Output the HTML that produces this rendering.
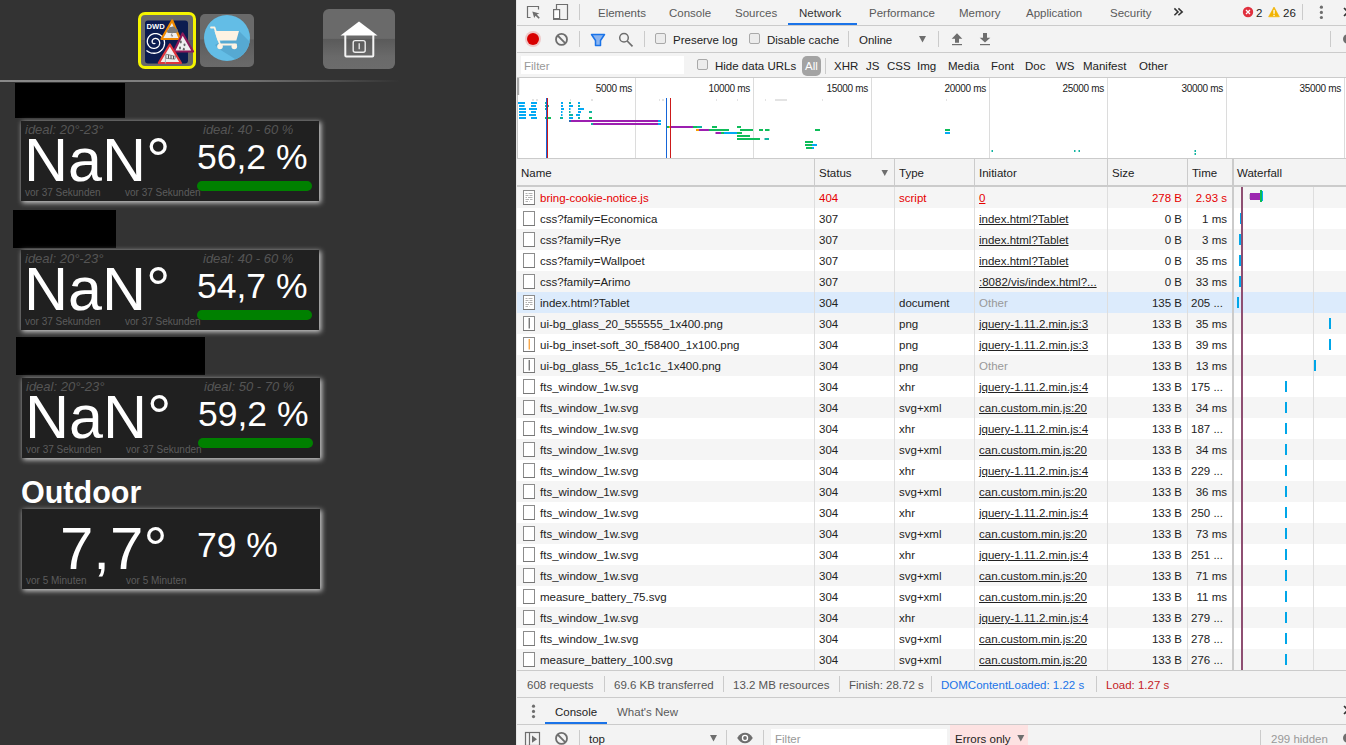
<!DOCTYPE html><html><head><meta charset="utf-8"><style>
*{margin:0;padding:0;box-sizing:border-box}
html,body{width:1346px;height:745px;overflow:hidden;background:#333;font-family:"Liberation Sans",sans-serif}
.ab{position:absolute}
.t{position:absolute;white-space:nowrap;font-size:11.5px;line-height:14px;color:#222}
#dt{position:absolute;left:516px;top:0;width:830px;height:745px;background:#f3f3f3;overflow:hidden}
.hl{position:absolute;height:1px;background:#cbcbcb}
.vl{position:absolute;width:1px;background:#cbcbcb}
.w{position:absolute;background:#202020;box-shadow:1.5px 1.5px 5px 0.5px rgba(255,255,255,.75)}
.big{position:absolute;color:#fff;white-space:nowrap}
.ideal{position:absolute;font-style:italic;font-size:13px;color:#555;white-space:nowrap;line-height:15px}
.vor{position:absolute;font-size:10px;color:#5c5c5c;white-space:nowrap;line-height:12px}
</style></head><body>
<div class="ab" style="left:0;top:80px;width:400px;height:2px;background:linear-gradient(90deg,#8a8a8a 0%,#777 60%,rgba(120,120,120,0) 100%)"></div>
<div class="ab" style="left:138px;top:12px;width:58px;height:57px;border:3px solid #f5f500;border-radius:7px;background:linear-gradient(180deg,#6a6a6a 0%,#6a6a6a 48%,#5c5c5c 50%,#666 80%,#6a6a6a 100%)"></div>
<div class="ab" style="left:200px;top:14px;width:54px;height:53px;border-radius:5px;background:linear-gradient(180deg,#6a6a6a 0%,#6a6a6a 47%,#5c5c5c 49%,#666 80%,#6a6a6a 100%)"></div>
<div class="ab" style="left:323px;top:9px;width:72px;height:60px;border-radius:6px;background:linear-gradient(180deg,#6a6a6a 0%,#6a6a6a 49%,#5a5a5a 50%,#6a6a6a 80%,#6c6c6c 100%)"></div>
<svg class="ab" style="left:0;top:0" width="516" height="80" viewBox="0 0 516 80"><rect x="145" y="20.5" width="43" height="43" rx="3" fill="#0c1c50"/><text x="146.5" y="28.8" font-family="Liberation Sans" font-weight="bold" font-size="7.6" fill="#fff">DWD</text><path d="M155.13 42.79 L155.11 42.89 L155.08 42.98 L155.04 43.08 L154.98 43.17 L154.90 43.26 L154.82 43.34 L154.72 43.41 L154.61 43.48 L154.49 43.53 L154.36 43.57 L154.21 43.60 L154.07 43.62 L153.91 43.62 L153.75 43.60 L153.59 43.56 L153.43 43.51 L153.27 43.44 L153.11 43.35 L152.96 43.24 L152.81 43.12 L152.68 42.97 L152.55 42.81 L152.44 42.63 L152.34 42.44 L152.26 42.24 L152.20 42.02 L152.16 41.79 L152.14 41.55 L152.14 41.31 L152.16 41.06 L152.21 40.81 L152.29 40.56 L152.39 40.31 L152.51 40.07 L152.66 39.84 L152.84 39.61 L153.03 39.40 L153.25 39.21 L153.50 39.03 L153.76 38.87 L154.04 38.73 L154.34 38.62 L154.65 38.53 L154.98 38.48 L155.31 38.45 L155.66 38.45 L156.00 38.48 L156.35 38.55 L156.69 38.65 L157.04 38.78 L157.37 38.94 L157.69 39.14 L158.00 39.37 L158.29 39.63 L158.56 39.91 L158.80 40.23 L159.02 40.57 L159.21 40.94 L159.37 41.32 L159.50 41.73 L159.59 42.15 L159.65 42.58 L159.66 43.02 L159.64 43.47 L159.57 43.92 L159.47 44.36 L159.32 44.80 L159.13 45.24 L158.90 45.65 L158.63 46.05 L158.32 46.43 L157.98 46.79 L157.60 47.12 L157.19 47.41 L156.75 47.68 L156.28 47.90 L155.79 48.08 L155.28 48.22 L154.75 48.32 L154.21 48.37 L153.67 48.37 L153.12 48.32 L152.56 48.22 L152.02 48.08 L151.48 47.88 L150.96 47.63 L150.46 47.34 L149.98 47.00 L149.52 46.61 L149.10 46.18 L148.72 45.71 L148.37 45.21 L148.07 44.67 L147.82 44.10 L147.61 43.50 L147.45 42.88 L147.35 42.25 L147.31 41.60 L147.32 40.95 L147.39 40.29 L147.52 39.64 L147.71 39.00 L147.96 38.36 L148.26 37.75 L148.62 37.16 L149.04 36.61 L149.50 36.08 L150.02 35.59 L150.58 35.15 L151.18 34.76 L151.82 34.42 L152.49 34.13 L153.19 33.90 L153.92 33.73 L154.66 33.63 L155.41 33.59 L156.17 33.62 L156.93 33.71 L157.69 33.87 L158.43 34.11 L159.16 34.40 L159.86 34.77 L160.53 35.19 L161.17 35.68 L161.77 36.22 L162.32 36.82 L162.82 37.48 L163.26 38.17 L163.64 38.91 L163.96 39.69 L164.21 40.49 L164.39 41.32 L164.50 42.17 L164.53 43.03 L164.49 43.90 L164.37 44.76 L164.17 45.62 L163.90 46.46 L163.55 47.28 L163.13 48.08 L162.64 48.83 L162.08 49.55 L161.45 50.22 L160.77 50.83 L160.02 51.39 L159.23 51.88 L158.39 52.30 L157.51 52.65 L156.60 52.92 L155.67 53.12 L154.71 53.23 L153.74 53.25 L152.77 53.19 L151.80 53.05 L150.84 52.82 L149.90 52.50 L148.99 52.10 L148.10 51.62 L147.26 51.07 L146.47 50.43" fill="none" stroke="#fff" stroke-width="1.3"/><path d="M172.2 20.5L180 39H161.5Z" fill="#eee" stroke="#f08a00" stroke-width="2.2" stroke-linejoin="round"/><path d="M168.3 33a1.8 1.8 0 0 1 0.2-3.5a2.4 2.4 0 0 1 2.6-2.4a2.6 2.6 0 0 1 4.3 1.4a2 2 0 0 1 0.4 4.5Z" fill="#7a7a7a"/><path d="M172 33.3l-1 2h1.6l-0.7 1.8" fill="none" stroke="#7a7a7a" stroke-width="0.8"/><path d="M182.6 33.5L193 51.5H173.8Z" fill="#eee" stroke="#8c1858" stroke-width="2.2" stroke-linejoin="round"/><ellipse cx="180.8" cy="42" rx="1" ry="1.4" fill="#666"/><ellipse cx="184.5" cy="44.8" rx="1" ry="1.4" fill="#666"/><ellipse cx="180" cy="48" rx="1" ry="1.4" fill="#666"/><ellipse cx="183.8" cy="49.2" rx="1" ry="1.4" fill="#666"/><path d="M169.8 44.5L181 63H158.8Z" fill="#eee" stroke="#e0343a" stroke-width="2.2" stroke-linejoin="round"/><path d="M165.4 63.5V54.5" stroke="#aaa" stroke-width="0.9"/><path d="M166 54.2L175.5 56.3L174.8 59.2L166 58.3Z" fill="#eee" stroke="#666" stroke-width="0.7"/><path d="M168.5 54.8V58.6M171 55.4V58.9M173.5 55.9V59" stroke="#555" stroke-width="1.1"/><defs><clipPath id="cc"><circle cx="227" cy="38" r="23"/></clipPath></defs><circle cx="227" cy="38" r="23" fill="#63bde6"/><path d="M239 31L262 54L240 62L219 49L215 45Z" fill="#56a9d2" clip-path="url(#cc)"/><path d="M211 27.5H214.5L220 44.5H236" fill="none" stroke="#fdf3e3" stroke-width="1.8" stroke-linecap="round" stroke-linejoin="round"/><path d="M214.5 31H239L236.3 40.5H217.5Z" fill="#fdf3e3"/><circle cx="220" cy="46.5" r="2.8" fill="#fdf3e3"/><circle cx="234.3" cy="46.5" r="2.8" fill="#fdf3e3"/><path d="M359 21.5L377.5 35.5H340.5Z" fill="#fff"/><path d="M345.3 35V55.5a1 1 0 0 0 1 1H372.3a1 1 0 0 0 1-1V35" fill="none" stroke="#f4f4f4" stroke-width="2"/><rect x="353.2" y="40.6" width="12" height="11.6" rx="2" fill="none" stroke="#eee" stroke-width="1.4"/><path d="M359.2 43.3V49.3" stroke="#eee" stroke-width="1.3"/></svg>
<div class="ab" style="left:15px;top:83px;width:110px;height:35px;background:#000"></div>
<div class="ab" style="left:13px;top:210px;width:103px;height:38px;background:#000"></div>
<div class="ab" style="left:16px;top:337px;width:189px;height:38px;background:#000"></div>
<div class="w" style="left:21px;top:121px;width:298px;height:80px"></div>
<div class="ideal" style="left:25px;top:122px">ideal: 20°-23°</div>
<div class="ideal" style="left:203px;top:122px">ideal: 40 - 60 %</div>
<div class="big" style="left:24px;top:130px;font-size:61px;line-height:60px">NaN°</div>
<div class="big" style="left:197px;top:139px;font-size:35.5px;line-height:36px">56,2 %</div>
<div class="vor" style="left:25px;top:187px">vor 37 Sekunden</div>
<div class="vor" style="left:125px;top:187px">vor 37 Sekunden</div>
<div class="ab" style="left:197px;top:181px;width:115px;height:10px;border-radius:5px;background:#008000"></div>
<div class="w" style="left:21px;top:250px;width:298px;height:80px"></div>
<div class="ideal" style="left:25px;top:251px">ideal: 20°-23°</div>
<div class="ideal" style="left:203px;top:251px">ideal: 40 - 60 %</div>
<div class="big" style="left:24px;top:259px;font-size:61px;line-height:60px">NaN°</div>
<div class="big" style="left:197px;top:268px;font-size:35.5px;line-height:36px">54,7 %</div>
<div class="vor" style="left:25px;top:316px">vor 37 Sekunden</div>
<div class="vor" style="left:125px;top:316px">vor 37 Sekunden</div>
<div class="ab" style="left:197px;top:310px;width:115px;height:10px;border-radius:5px;background:#008000"></div>
<div class="w" style="left:22px;top:378px;width:298px;height:80px"></div>
<div class="ideal" style="left:26px;top:379px">ideal: 20°-23°</div>
<div class="ideal" style="left:204px;top:379px">ideal: 50 - 70 %</div>
<div class="big" style="left:25px;top:387px;font-size:61px;line-height:60px">NaN°</div>
<div class="big" style="left:198px;top:396px;font-size:35.5px;line-height:36px">59,2 %</div>
<div class="vor" style="left:26px;top:444px">vor 37 Sekunden</div>
<div class="vor" style="left:126px;top:444px">vor 37 Sekunden</div>
<div class="ab" style="left:198px;top:438px;width:115px;height:10px;border-radius:5px;background:#008000"></div>
<div class="big" style="left:21px;top:475px;font-size:30.5px;line-height:34px;font-weight:bold">Outdoor</div>
<div class="w" style="left:22px;top:509px;width:298px;height:80px"></div>
<div class="big" style="left:60px;top:519px;font-size:60px;line-height:60px">7,7°</div>
<div class="big" style="left:197px;top:527px;font-size:35.5px;line-height:36px">79 %</div>
<div class="vor" style="left:26px;top:575px">vor 5 Minuten</div>
<div class="vor" style="left:126px;top:575px">vor 5 Minuten</div>
<div id="dt">
<div class="ab" style="left:0;top:0;width:1px;height:745px;background:#e6e6e6"></div>
<div class="hl" style="left:1px;top:25px;width:830px"></div>
<div class="hl" style="left:1px;top:52px;width:830px"></div>
<div class="hl" style="left:1px;top:77px;width:830px"></div>
<div class="t" style="left:82px;top:6px;color:#5a5a5a">Elements</div>
<div class="t" style="left:153px;top:6px;color:#5a5a5a">Console</div>
<div class="t" style="left:219px;top:6px;color:#5a5a5a">Sources</div>
<div class="t" style="left:283px;top:6px;color:#333">Network</div>
<div class="t" style="left:353px;top:6px;color:#5a5a5a">Performance</div>
<div class="t" style="left:443px;top:6px;color:#5a5a5a">Memory</div>
<div class="t" style="left:510px;top:6px;color:#5a5a5a">Application</div>
<div class="t" style="left:594px;top:6px;color:#5a5a5a">Security</div>
<div class="ab" style="left:272px;top:23px;width:69px;height:2px;background:#1a73e8"></div>
<div class="vl" style="left:63px;top:4px;height:16px"></div>
<div class="vl" style="left:786px;top:4px;height:16px"></div>
<div class="t" style="left:740px;top:6px;">2</div>
<div class="t" style="left:767px;top:6px;">26</div>
<div class="t" style="left:157px;top:33px;">Preserve log</div>
<div class="t" style="left:251px;top:33px;">Disable cache</div>
<div class="t" style="left:343px;top:33px;">Online</div>
<div class="vl" style="left:63px;top:31px;height:16px"></div>
<div class="vl" style="left:128px;top:31px;height:16px"></div>
<div class="vl" style="left:332px;top:31px;height:16px"></div>
<div class="vl" style="left:422px;top:31px;height:16px"></div>
<div class="vl" style="left:814px;top:31px;height:16px"></div>
<div class="ab" style="left:139px;top:33px;width:11px;height:11px;border:1px solid #a9a9a9;border-radius:2px;background:#ececec"></div>
<div class="ab" style="left:233px;top:33px;width:11px;height:11px;border:1px solid #a9a9a9;border-radius:2px;background:#ececec"></div>
<div class="ab" style="left:5px;top:56px;width:163px;height:18px;background:#fff"></div>
<div class="t" style="left:8px;top:59px;color:#999">Filter</div>
<div class="ab" style="left:181px;top:59px;width:11px;height:11px;border:1px solid #a9a9a9;border-radius:2px;background:#ececec"></div>
<div class="t" style="left:199px;top:59px;">Hide data URLs</div>
<div class="ab" style="left:286px;top:56px;width:19px;height:20px;border-radius:5px;background:#a3a3a3"></div>
<div class="t" style="left:289px;top:59px;color:#fff">All</div>
<div class="vl" style="left:309px;top:58px;height:16px"></div>
<div class="t" style="left:318px;top:59px;">XHR</div>
<div class="t" style="left:350px;top:59px;">JS</div>
<div class="t" style="left:371px;top:59px;">CSS</div>
<div class="t" style="left:401px;top:59px;">Img</div>
<div class="t" style="left:432px;top:59px;">Media</div>
<div class="t" style="left:475px;top:59px;">Font</div>
<div class="t" style="left:509px;top:59px;">Doc</div>
<div class="t" style="left:540px;top:59px;">WS</div>
<div class="t" style="left:567px;top:59px;">Manifest</div>
<div class="t" style="left:623px;top:59px;">Other</div>
<div class="ab" style="left:1px;top:78px;width:830px;height:80px;background:#fff"></div>
<div class="hl" style="left:1px;top:158px;width:830px"></div>
<div class="ab" style="left:119px;top:78px;width:1px;height:80px;background:#dcdcdc"></div>
<div class="t" style="left:39px;top:82px;width:77px;text-align:right;font-size:10px;letter-spacing:-0.3px">5000 ms</div>
<div class="ab" style="left:237px;top:78px;width:1px;height:80px;background:#dcdcdc"></div>
<div class="t" style="left:157px;top:82px;width:77px;text-align:right;font-size:10px;letter-spacing:-0.3px">10000 ms</div>
<div class="ab" style="left:355px;top:78px;width:1px;height:80px;background:#dcdcdc"></div>
<div class="t" style="left:275px;top:82px;width:77px;text-align:right;font-size:10px;letter-spacing:-0.3px">15000 ms</div>
<div class="ab" style="left:473px;top:78px;width:1px;height:80px;background:#dcdcdc"></div>
<div class="t" style="left:393px;top:82px;width:77px;text-align:right;font-size:10px;letter-spacing:-0.3px">20000 ms</div>
<div class="ab" style="left:591px;top:78px;width:1px;height:80px;background:#dcdcdc"></div>
<div class="t" style="left:511px;top:82px;width:77px;text-align:right;font-size:10px;letter-spacing:-0.3px">25000 ms</div>
<div class="ab" style="left:710px;top:78px;width:1px;height:80px;background:#dcdcdc"></div>
<div class="t" style="left:630px;top:82px;width:77px;text-align:right;font-size:10px;letter-spacing:-0.3px">30000 ms</div>
<div class="ab" style="left:828px;top:78px;width:1px;height:80px;background:#dcdcdc"></div>
<div class="t" style="left:748px;top:82px;width:77px;text-align:right;font-size:10px;letter-spacing:-0.3px">35000 ms</div>
<div class="hl" style="left:1px;top:185px;width:830px;height:2px"></div>
<div class="t" style="left:5px;top:166px;">Name</div>
<div class="t" style="left:303px;top:166px;">Status</div>
<div class="t" style="left:383px;top:166px;">Type</div>
<div class="t" style="left:463px;top:166px;">Initiator</div>
<div class="t" style="left:596px;top:166px;">Size</div>
<div class="t" style="left:676px;top:166px;">Time</div>
<div class="t" style="left:721px;top:166px;">Waterfall</div>
<div class="ab" style="left:1px;top:187px;width:830px;height:21px;background:#f5f5f5"></div>
<div class="ab" style="left:1px;top:208px;width:830px;height:21px;background:#fff"></div>
<div class="ab" style="left:1px;top:229px;width:830px;height:21px;background:#f5f5f5"></div>
<div class="ab" style="left:1px;top:250px;width:830px;height:21px;background:#fff"></div>
<div class="ab" style="left:1px;top:271px;width:830px;height:21px;background:#f5f5f5"></div>
<div class="ab" style="left:1px;top:292px;width:830px;height:21px;background:#dcebfc"></div>
<div class="ab" style="left:1px;top:313px;width:830px;height:21px;background:#f5f5f5"></div>
<div class="ab" style="left:1px;top:334px;width:830px;height:21px;background:#fff"></div>
<div class="ab" style="left:1px;top:355px;width:830px;height:21px;background:#f5f5f5"></div>
<div class="ab" style="left:1px;top:376px;width:830px;height:21px;background:#fff"></div>
<div class="ab" style="left:1px;top:397px;width:830px;height:21px;background:#f5f5f5"></div>
<div class="ab" style="left:1px;top:418px;width:830px;height:21px;background:#fff"></div>
<div class="ab" style="left:1px;top:439px;width:830px;height:21px;background:#f5f5f5"></div>
<div class="ab" style="left:1px;top:460px;width:830px;height:21px;background:#fff"></div>
<div class="ab" style="left:1px;top:481px;width:830px;height:21px;background:#f5f5f5"></div>
<div class="ab" style="left:1px;top:502px;width:830px;height:21px;background:#fff"></div>
<div class="ab" style="left:1px;top:523px;width:830px;height:21px;background:#f5f5f5"></div>
<div class="ab" style="left:1px;top:544px;width:830px;height:21px;background:#fff"></div>
<div class="ab" style="left:1px;top:565px;width:830px;height:21px;background:#f5f5f5"></div>
<div class="ab" style="left:1px;top:586px;width:830px;height:21px;background:#fff"></div>
<div class="ab" style="left:1px;top:607px;width:830px;height:21px;background:#f5f5f5"></div>
<div class="ab" style="left:1px;top:628px;width:830px;height:21px;background:#fff"></div>
<div class="ab" style="left:1px;top:649px;width:830px;height:21px;background:#f5f5f5"></div>
<div class="t" style="left:24px;top:191px;color:#e60000;">bring-cookie-notice.js</div>
<div class="t" style="left:303px;top:191px;color:#e60000;">404</div>
<div class="t" style="left:383px;top:191px;color:#e60000;">script</div>
<div class="t" style="left:463px;top:191px;color:#e60000;text-decoration:underline">0</div>
<div class="t" style="left:592px;top:191px;width:74px;text-align:right;color:#e60000;">278 B</div>
<div class="t" style="left:672px;top:191px;width:39px;text-align:right;color:#e60000;">2.93 s</div>
<div class="t" style="left:24px;top:212px;">css?family=Economica</div>
<div class="t" style="left:303px;top:212px;">307</div>
<div class="t" style="left:383px;top:212px;"></div>
<div class="t" style="left:463px;top:212px;text-decoration:underline">index.html?Tablet</div>
<div class="t" style="left:592px;top:212px;width:74px;text-align:right;">0 B</div>
<div class="t" style="left:672px;top:212px;width:39px;text-align:right;">1 ms</div>
<div class="ab" style="left:724px;top:213px;width:2px;height:11px;background:#00a6e8"></div>
<div class="t" style="left:24px;top:233px;">css?family=Rye</div>
<div class="t" style="left:303px;top:233px;">307</div>
<div class="t" style="left:383px;top:233px;"></div>
<div class="t" style="left:463px;top:233px;text-decoration:underline">index.html?Tablet</div>
<div class="t" style="left:592px;top:233px;width:74px;text-align:right;">0 B</div>
<div class="t" style="left:672px;top:233px;width:39px;text-align:right;">3 ms</div>
<div class="ab" style="left:723px;top:234px;width:2px;height:11px;background:#00a6e8"></div>
<div class="t" style="left:24px;top:254px;">css?family=Wallpoet</div>
<div class="t" style="left:303px;top:254px;">307</div>
<div class="t" style="left:383px;top:254px;"></div>
<div class="t" style="left:463px;top:254px;text-decoration:underline">index.html?Tablet</div>
<div class="t" style="left:592px;top:254px;width:74px;text-align:right;">0 B</div>
<div class="t" style="left:672px;top:254px;width:39px;text-align:right;">35 ms</div>
<div class="ab" style="left:723px;top:255px;width:2px;height:11px;background:#00a6e8"></div>
<div class="t" style="left:24px;top:275px;">css?family=Arimo</div>
<div class="t" style="left:303px;top:275px;">307</div>
<div class="t" style="left:383px;top:275px;"></div>
<div class="t" style="left:463px;top:275px;text-decoration:underline">:8082/vis/index.html?...</div>
<div class="t" style="left:592px;top:275px;width:74px;text-align:right;">0 B</div>
<div class="t" style="left:672px;top:275px;width:39px;text-align:right;">33 ms</div>
<div class="ab" style="left:723px;top:276px;width:2px;height:11px;background:#00a6e8"></div>
<div class="t" style="left:24px;top:296px;">index.html?Tablet</div>
<div class="t" style="left:303px;top:296px;">304</div>
<div class="t" style="left:383px;top:296px;">document</div>
<div class="t" style="left:463px;top:296px;color:#999">Other</div>
<div class="t" style="left:592px;top:296px;width:74px;text-align:right;">135 B</div>
<div class="t" style="left:675px;top:296px;">205 ...</div>
<div class="ab" style="left:721px;top:297px;width:2px;height:11px;background:#00a6e8"></div>
<div class="t" style="left:24px;top:317px;">ui-bg_glass_20_555555_1x400.png</div>
<div class="t" style="left:303px;top:317px;">304</div>
<div class="t" style="left:383px;top:317px;">png</div>
<div class="t" style="left:463px;top:317px;text-decoration:underline">jquery-1.11.2.min.js:3</div>
<div class="t" style="left:592px;top:317px;width:74px;text-align:right;">133 B</div>
<div class="t" style="left:672px;top:317px;width:39px;text-align:right;">35 ms</div>
<div class="ab" style="left:813px;top:318px;width:2px;height:11px;background:#00a6e8"></div>
<div class="t" style="left:24px;top:338px;">ui-bg_inset-soft_30_f58400_1x100.png</div>
<div class="t" style="left:303px;top:338px;">304</div>
<div class="t" style="left:383px;top:338px;">png</div>
<div class="t" style="left:463px;top:338px;text-decoration:underline">jquery-1.11.2.min.js:3</div>
<div class="t" style="left:592px;top:338px;width:74px;text-align:right;">133 B</div>
<div class="t" style="left:672px;top:338px;width:39px;text-align:right;">39 ms</div>
<div class="ab" style="left:813px;top:339px;width:2px;height:11px;background:#00a6e8"></div>
<div class="t" style="left:24px;top:359px;">ui-bg_glass_55_1c1c1c_1x400.png</div>
<div class="t" style="left:303px;top:359px;">304</div>
<div class="t" style="left:383px;top:359px;">png</div>
<div class="t" style="left:463px;top:359px;color:#999">Other</div>
<div class="t" style="left:592px;top:359px;width:74px;text-align:right;">133 B</div>
<div class="t" style="left:672px;top:359px;width:39px;text-align:right;">13 ms</div>
<div class="ab" style="left:798px;top:360px;width:2px;height:11px;background:#00a6e8"></div>
<div class="t" style="left:24px;top:380px;">fts_window_1w.svg</div>
<div class="t" style="left:303px;top:380px;">304</div>
<div class="t" style="left:383px;top:380px;">xhr</div>
<div class="t" style="left:463px;top:380px;text-decoration:underline">jquery-1.11.2.min.js:4</div>
<div class="t" style="left:592px;top:380px;width:74px;text-align:right;">133 B</div>
<div class="t" style="left:675px;top:380px;">175 ...</div>
<div class="ab" style="left:769px;top:381px;width:2px;height:11px;background:#00a6e8"></div>
<div class="t" style="left:24px;top:401px;">fts_window_1w.svg</div>
<div class="t" style="left:303px;top:401px;">304</div>
<div class="t" style="left:383px;top:401px;">svg+xml</div>
<div class="t" style="left:463px;top:401px;text-decoration:underline">can.custom.min.js:20</div>
<div class="t" style="left:592px;top:401px;width:74px;text-align:right;">133 B</div>
<div class="t" style="left:672px;top:401px;width:39px;text-align:right;">34 ms</div>
<div class="ab" style="left:769px;top:402px;width:2px;height:11px;background:#00a6e8"></div>
<div class="t" style="left:24px;top:422px;">fts_window_1w.svg</div>
<div class="t" style="left:303px;top:422px;">304</div>
<div class="t" style="left:383px;top:422px;">xhr</div>
<div class="t" style="left:463px;top:422px;text-decoration:underline">jquery-1.11.2.min.js:4</div>
<div class="t" style="left:592px;top:422px;width:74px;text-align:right;">133 B</div>
<div class="t" style="left:675px;top:422px;">187 ...</div>
<div class="ab" style="left:769px;top:423px;width:2px;height:11px;background:#00a6e8"></div>
<div class="t" style="left:24px;top:443px;">fts_window_1w.svg</div>
<div class="t" style="left:303px;top:443px;">304</div>
<div class="t" style="left:383px;top:443px;">svg+xml</div>
<div class="t" style="left:463px;top:443px;text-decoration:underline">can.custom.min.js:20</div>
<div class="t" style="left:592px;top:443px;width:74px;text-align:right;">133 B</div>
<div class="t" style="left:672px;top:443px;width:39px;text-align:right;">34 ms</div>
<div class="ab" style="left:769px;top:444px;width:2px;height:11px;background:#00a6e8"></div>
<div class="t" style="left:24px;top:464px;">fts_window_1w.svg</div>
<div class="t" style="left:303px;top:464px;">304</div>
<div class="t" style="left:383px;top:464px;">xhr</div>
<div class="t" style="left:463px;top:464px;text-decoration:underline">jquery-1.11.2.min.js:4</div>
<div class="t" style="left:592px;top:464px;width:74px;text-align:right;">133 B</div>
<div class="t" style="left:675px;top:464px;">229 ...</div>
<div class="ab" style="left:769px;top:465px;width:2px;height:11px;background:#00a6e8"></div>
<div class="t" style="left:24px;top:485px;">fts_window_1w.svg</div>
<div class="t" style="left:303px;top:485px;">304</div>
<div class="t" style="left:383px;top:485px;">svg+xml</div>
<div class="t" style="left:463px;top:485px;text-decoration:underline">can.custom.min.js:20</div>
<div class="t" style="left:592px;top:485px;width:74px;text-align:right;">133 B</div>
<div class="t" style="left:672px;top:485px;width:39px;text-align:right;">36 ms</div>
<div class="ab" style="left:769px;top:486px;width:2px;height:11px;background:#00a6e8"></div>
<div class="t" style="left:24px;top:506px;">fts_window_1w.svg</div>
<div class="t" style="left:303px;top:506px;">304</div>
<div class="t" style="left:383px;top:506px;">xhr</div>
<div class="t" style="left:463px;top:506px;text-decoration:underline">jquery-1.11.2.min.js:4</div>
<div class="t" style="left:592px;top:506px;width:74px;text-align:right;">133 B</div>
<div class="t" style="left:675px;top:506px;">250 ...</div>
<div class="ab" style="left:769px;top:507px;width:2px;height:11px;background:#00a6e8"></div>
<div class="t" style="left:24px;top:527px;">fts_window_1w.svg</div>
<div class="t" style="left:303px;top:527px;">304</div>
<div class="t" style="left:383px;top:527px;">svg+xml</div>
<div class="t" style="left:463px;top:527px;text-decoration:underline">can.custom.min.js:20</div>
<div class="t" style="left:592px;top:527px;width:74px;text-align:right;">133 B</div>
<div class="t" style="left:672px;top:527px;width:39px;text-align:right;">73 ms</div>
<div class="ab" style="left:769px;top:528px;width:2px;height:11px;background:#00a6e8"></div>
<div class="t" style="left:24px;top:548px;">fts_window_1w.svg</div>
<div class="t" style="left:303px;top:548px;">304</div>
<div class="t" style="left:383px;top:548px;">xhr</div>
<div class="t" style="left:463px;top:548px;text-decoration:underline">jquery-1.11.2.min.js:4</div>
<div class="t" style="left:592px;top:548px;width:74px;text-align:right;">133 B</div>
<div class="t" style="left:675px;top:548px;">251 ...</div>
<div class="ab" style="left:769px;top:549px;width:2px;height:11px;background:#00a6e8"></div>
<div class="t" style="left:24px;top:569px;">fts_window_1w.svg</div>
<div class="t" style="left:303px;top:569px;">304</div>
<div class="t" style="left:383px;top:569px;">svg+xml</div>
<div class="t" style="left:463px;top:569px;text-decoration:underline">can.custom.min.js:20</div>
<div class="t" style="left:592px;top:569px;width:74px;text-align:right;">133 B</div>
<div class="t" style="left:672px;top:569px;width:39px;text-align:right;">71 ms</div>
<div class="ab" style="left:769px;top:570px;width:2px;height:11px;background:#00a6e8"></div>
<div class="t" style="left:24px;top:590px;">measure_battery_75.svg</div>
<div class="t" style="left:303px;top:590px;">304</div>
<div class="t" style="left:383px;top:590px;">svg+xml</div>
<div class="t" style="left:463px;top:590px;text-decoration:underline">can.custom.min.js:20</div>
<div class="t" style="left:592px;top:590px;width:74px;text-align:right;">133 B</div>
<div class="t" style="left:672px;top:590px;width:39px;text-align:right;">11 ms</div>
<div class="ab" style="left:769px;top:591px;width:2px;height:11px;background:#00a6e8"></div>
<div class="t" style="left:24px;top:611px;">fts_window_1w.svg</div>
<div class="t" style="left:303px;top:611px;">304</div>
<div class="t" style="left:383px;top:611px;">xhr</div>
<div class="t" style="left:463px;top:611px;text-decoration:underline">jquery-1.11.2.min.js:4</div>
<div class="t" style="left:592px;top:611px;width:74px;text-align:right;">133 B</div>
<div class="t" style="left:675px;top:611px;">279 ...</div>
<div class="ab" style="left:769px;top:612px;width:2px;height:11px;background:#00a6e8"></div>
<div class="t" style="left:24px;top:632px;">fts_window_1w.svg</div>
<div class="t" style="left:303px;top:632px;">304</div>
<div class="t" style="left:383px;top:632px;">svg+xml</div>
<div class="t" style="left:463px;top:632px;text-decoration:underline">can.custom.min.js:20</div>
<div class="t" style="left:592px;top:632px;width:74px;text-align:right;">133 B</div>
<div class="t" style="left:675px;top:632px;">278 ...</div>
<div class="ab" style="left:769px;top:633px;width:2px;height:11px;background:#00a6e8"></div>
<div class="t" style="left:24px;top:653px;">measure_battery_100.svg</div>
<div class="t" style="left:303px;top:653px;">304</div>
<div class="t" style="left:383px;top:653px;">svg+xml</div>
<div class="t" style="left:463px;top:653px;text-decoration:underline">can.custom.min.js:20</div>
<div class="t" style="left:592px;top:653px;width:74px;text-align:right;">133 B</div>
<div class="t" style="left:675px;top:653px;">276 ...</div>
<div class="ab" style="left:769px;top:654px;width:2px;height:11px;background:#00a6e8"></div>
<div class="ab" style="left:298px;top:159px;width:1px;height:26px;background:#cbcbcb"></div>
<div class="ab" style="left:298px;top:187px;width:1px;height:483px;background:#dedede"></div>
<div class="ab" style="left:378px;top:159px;width:1px;height:26px;background:#cbcbcb"></div>
<div class="ab" style="left:378px;top:187px;width:1px;height:483px;background:#dedede"></div>
<div class="ab" style="left:458px;top:159px;width:1px;height:26px;background:#cbcbcb"></div>
<div class="ab" style="left:458px;top:187px;width:1px;height:483px;background:#dedede"></div>
<div class="ab" style="left:591px;top:159px;width:1px;height:26px;background:#cbcbcb"></div>
<div class="ab" style="left:591px;top:187px;width:1px;height:483px;background:#dedede"></div>
<div class="ab" style="left:671px;top:159px;width:1px;height:26px;background:#cbcbcb"></div>
<div class="ab" style="left:671px;top:187px;width:1px;height:483px;background:#dedede"></div>
<div class="ab" style="left:716px;top:159px;width:2px;height:511px;background:#cbcbcb"></div>
<div class="ab" style="left:797px;top:187px;width:1px;height:483px;background:#dedede"></div>
<div class="ab" style="left:725px;top:187px;width:2px;height:483px;background:#8e4f72"></div>
<div class="ab" style="left:734px;top:193px;width:10px;height:7px;background:#9c27b0"></div>
<div class="ab" style="left:744px;top:190px;width:2px;height:12px;background:#0cbb52"></div>
<div class="ab" style="left:746px;top:191px;width:1px;height:10px;background:#03a9f4"></div>
<div class="ab" style="left:733px;top:194px;width:1px;height:5px;background:#c8c8c8"></div>
<div class="hl" style="left:1px;top:670px;width:830px"></div>
<div class="hl" style="left:1px;top:697px;width:830px"></div>
<div class="t" style="left:11px;top:678px;color:#555">608 requests</div>
<div class="t" style="left:98px;top:678px;color:#555">69.6 KB transferred</div>
<div class="t" style="left:217px;top:678px;color:#555">13.2 MB resources</div>
<div class="t" style="left:333px;top:678px;color:#555">Finish: 28.72 s</div>
<div class="t" style="left:425px;top:678px;color:#1a73e8">DOMContentLoaded: 1.22 s</div>
<div class="t" style="left:590px;top:678px;color:#c5221f">Load: 1.27 s</div>
<div class="vl" style="left:88px;top:676px;height:16px"></div>
<div class="vl" style="left:207px;top:676px;height:16px"></div>
<div class="vl" style="left:323px;top:676px;height:16px"></div>
<div class="vl" style="left:415px;top:676px;height:16px"></div>
<div class="vl" style="left:580px;top:676px;height:16px"></div>
<div class="t" style="left:39px;top:705px;">Console</div>
<div class="t" style="left:101px;top:705px;color:#5a5a5a">What's New</div>
<div class="ab" style="left:29px;top:722px;width:62px;height:2px;background:#1a73e8"></div>
<div class="hl" style="left:1px;top:724px;width:830px"></div>
<div class="t" style="left:73px;top:732px;">top</div>
<div class="vl" style="left:63px;top:730px;height:16px"></div>
<div class="vl" style="left:210px;top:730px;height:16px"></div>
<div class="vl" style="left:247px;top:730px;height:16px"></div>
<div class="vl" style="left:744px;top:730px;height:16px"></div>
<div class="ab" style="left:255px;top:729px;width:176px;height:16px;background:#fff"></div>
<div class="t" style="left:259px;top:732px;color:#999">Filter</div>
<div class="ab" style="left:434px;top:725px;width:78px;height:20px;background:#fde2e2"></div>
<div class="t" style="left:439px;top:732px;">Errors only</div>
<div class="t" style="left:755px;top:732px;color:#999">299 hidden</div>
</div>
<svg class="ab" style="left:0;top:0" width="1346" height="745" viewBox="0 0 1346 745"><path d="M530.5 17.5H527.5V6.5H538.5V9.5" fill="none" stroke="#6e6e6e" stroke-width="1.2"/><path d="M532.3 11.4L539.4 13.6L536.8 14.6L539.8 17.8L538.6 18.8L535.5 15.8L534.2 17.9Z" fill="#6e6e6e"/><path d="M556.5 9.5V4.5H567.5V19.5H559.5" fill="none" stroke="#6e6e6e" stroke-width="1.2"/><rect x="553.6" y="9.6" width="6" height="9.6" fill="#fff" stroke="#6e6e6e" stroke-width="1.2"/><rect x="553" y="18" width="7.2" height="1.8" fill="#6e6e6e"/><circle cx="533" cy="39" r="8" fill="#d80000" opacity="0.18"/><circle cx="533" cy="39" r="6" fill="#d80000"/><circle cx="561.5" cy="39.4" r="5.5" fill="none" stroke="#6e6e6e" stroke-width="1.8"/><path d="M557.6 35.5L565.4 43.3" stroke="#6e6e6e" stroke-width="1.8"/><circle cx="561.5" cy="738.4" r="5.5" fill="none" stroke="#6e6e6e" stroke-width="1.8"/><path d="M557.6 734.5L565.4 742.3" stroke="#6e6e6e" stroke-width="1.8"/><path d="M591.5 34.5H604.5L600.5 40.5V45.5H595.5V40.5Z" fill="#8ab4f0" stroke="#1a73e8" stroke-width="1.5" stroke-linejoin="round"/><circle cx="624" cy="37.8" r="4.3" fill="none" stroke="#6e6e6e" stroke-width="1.5"/><path d="M627.2 41L632.5 46.3" stroke="#6e6e6e" stroke-width="1.7"/><path d="M919 36H926L922.5 42.5Z" fill="#6e6e6e"/><path d="M710 735H717L713.5 741.5Z" fill="#6e6e6e"/><path d="M1017.3 735H1024.3L1020.8 741.5Z" fill="#6e6e6e"/><path d="M881.5 170H888L884.75 176Z" fill="#6e6e6e"/><path d="M957 33.3L962.3 38.8H959V42.8H955V38.8H951.7Z" fill="#6e6e6e"/><rect x="952" y="44" width="10" height="1.2" fill="#6e6e6e"/><path d="M983 33H987V37.8H990.3L985 42.6L979.7 37.8H983Z" fill="#6e6e6e"/><rect x="980" y="44" width="10" height="1.2" fill="#6e6e6e"/><path d="M1174.4 8.4L1178 11.9L1174.4 15.3M1178.4 8.4L1182.2 11.9L1178.4 15.3" fill="none" stroke="#333" stroke-width="1.5"/><circle cx="1248" cy="12" r="5.2" fill="#e0303e"/><path d="M1246 10L1250 14M1250 10L1246 14" stroke="#fff" stroke-width="1.3"/><path d="M1274 7L1279.4 16.8H1268.6Z" fill="#f2b400" stroke="#f2b400" stroke-width="0.6" stroke-linejoin="round"/><rect x="1273.4" y="9.8" width="1.3" height="4" fill="#fff"/><rect x="1273.4" y="14.8" width="1.3" height="1.3" fill="#fff"/><circle cx="1321.4" cy="7.2" r="1.6" fill="#6e6e6e"/><circle cx="1321.4" cy="12.4" r="1.6" fill="#6e6e6e"/><circle cx="1321.4" cy="17.5" r="1.6" fill="#6e6e6e"/><circle cx="533.5" cy="706.2" r="1.6" fill="#6e6e6e"/><circle cx="533.5" cy="711.4" r="1.6" fill="#6e6e6e"/><circle cx="533.5" cy="716.6" r="1.6" fill="#6e6e6e"/><path d="M1344 8L1352 16M1352 8L1344 16" stroke="#333" stroke-width="1.6"/><path d="M1344 706L1352 714M1352 706L1344 714" stroke="#333" stroke-width="1.6"/><circle cx="1348" cy="39" r="5" fill="#6e6e6e"/><circle cx="1348" cy="738" r="5" fill="#6e6e6e"/><rect x="525.5" y="732.5" width="14" height="13" fill="none" stroke="#6e6e6e" stroke-width="1.2"/><path d="M529.5 732.5V745" stroke="#6e6e6e" stroke-width="1.2"/><path d="M532 735.5L537 739.2L532 742.8Z" fill="#6e6e6e"/><path d="M737.2 738C739.5 734.3 742 732.8 745 732.8C748 732.8 750.5 734.3 752.8 738C750.5 741.7 748 743.2 745 743.2C742 743.2 739.5 741.7 737.2 738Z" fill="#6e6e6e"/><circle cx="745" cy="738" r="3.2" fill="#fff"/><circle cx="745" cy="738" r="1.9" fill="#6e6e6e"/><rect x="523.5" y="190.5" width="11" height="14" fill="#fff" stroke="#8c8c8c" stroke-width="1"/><rect x="523" y="204" width="12" height="1" fill="#777"/><rect x="525.5" y="193" width="2.0" height="0.9" fill="#aaa"/><rect x="528.5" y="193" width="4.0" height="0.9" fill="#aaa"/><rect x="525.5" y="195" width="3.0" height="0.9" fill="#aaa"/><rect x="529.5" y="195" width="3.0" height="0.9" fill="#aaa"/><rect x="525.5" y="197" width="1.5" height="0.9" fill="#aaa"/><rect x="528" y="197" width="4.5" height="0.9" fill="#aaa"/><rect x="525.5" y="199" width="3.5" height="0.9" fill="#aaa"/><rect x="530" y="199" width="2.5" height="0.9" fill="#aaa"/><rect x="525.5" y="201" width="2.5" height="0.9" fill="#aaa"/><rect x="529" y="201" width="0.5" height="0.9" fill="#aaa"/><rect x="523.5" y="211.5" width="11" height="14" fill="#fff" stroke="#8c8c8c" stroke-width="1"/><rect x="523" y="225" width="12" height="1" fill="#777"/><rect x="523.5" y="232.5" width="11" height="14" fill="#fff" stroke="#8c8c8c" stroke-width="1"/><rect x="523" y="246" width="12" height="1" fill="#777"/><rect x="523.5" y="253.5" width="11" height="14" fill="#fff" stroke="#8c8c8c" stroke-width="1"/><rect x="523" y="267" width="12" height="1" fill="#777"/><rect x="523.5" y="274.5" width="11" height="14" fill="#fff" stroke="#8c8c8c" stroke-width="1"/><rect x="523" y="288" width="12" height="1" fill="#777"/><rect x="523.5" y="295.5" width="11" height="14" fill="#fff" stroke="#8c8c8c" stroke-width="1"/><rect x="523" y="309" width="12" height="1" fill="#777"/><rect x="525.5" y="298" width="2.0" height="0.9" fill="#aaa"/><rect x="528.5" y="298" width="4.0" height="0.9" fill="#aaa"/><rect x="525.5" y="300" width="3.0" height="0.9" fill="#aaa"/><rect x="529.5" y="300" width="3.0" height="0.9" fill="#aaa"/><rect x="525.5" y="302" width="1.5" height="0.9" fill="#aaa"/><rect x="528" y="302" width="4.5" height="0.9" fill="#aaa"/><rect x="525.5" y="304" width="3.5" height="0.9" fill="#aaa"/><rect x="530" y="304" width="2.5" height="0.9" fill="#aaa"/><rect x="525.5" y="306" width="2.5" height="0.9" fill="#aaa"/><rect x="529" y="306" width="0.5" height="0.9" fill="#aaa"/><rect x="523.5" y="316.5" width="11" height="14" fill="#fff" stroke="#8c8c8c" stroke-width="1"/><rect x="523" y="330" width="12" height="1" fill="#777"/><rect x="528.7" y="318" width="1" height="10.5" fill="#444"/><rect x="523.5" y="337.5" width="11" height="14" fill="#fff" stroke="#8c8c8c" stroke-width="1"/><rect x="523" y="351" width="12" height="1" fill="#777"/><rect x="528.7" y="339" width="1" height="10.5" fill="#f58400"/><rect x="523.5" y="358.5" width="11" height="14" fill="#fff" stroke="#8c8c8c" stroke-width="1"/><rect x="523" y="372" width="12" height="1" fill="#777"/><rect x="528.7" y="360" width="1" height="10.5" fill="#444"/><rect x="523.5" y="379.5" width="11" height="14" fill="#fff" stroke="#8c8c8c" stroke-width="1"/><rect x="523" y="393" width="12" height="1" fill="#777"/><rect x="523.5" y="400.5" width="11" height="14" fill="#fff" stroke="#8c8c8c" stroke-width="1"/><rect x="523" y="414" width="12" height="1" fill="#777"/><rect x="523.5" y="421.5" width="11" height="14" fill="#fff" stroke="#8c8c8c" stroke-width="1"/><rect x="523" y="435" width="12" height="1" fill="#777"/><rect x="523.5" y="442.5" width="11" height="14" fill="#fff" stroke="#8c8c8c" stroke-width="1"/><rect x="523" y="456" width="12" height="1" fill="#777"/><rect x="523.5" y="463.5" width="11" height="14" fill="#fff" stroke="#8c8c8c" stroke-width="1"/><rect x="523" y="477" width="12" height="1" fill="#777"/><rect x="523.5" y="484.5" width="11" height="14" fill="#fff" stroke="#8c8c8c" stroke-width="1"/><rect x="523" y="498" width="12" height="1" fill="#777"/><rect x="523.5" y="505.5" width="11" height="14" fill="#fff" stroke="#8c8c8c" stroke-width="1"/><rect x="523" y="519" width="12" height="1" fill="#777"/><rect x="523.5" y="526.5" width="11" height="14" fill="#fff" stroke="#8c8c8c" stroke-width="1"/><rect x="523" y="540" width="12" height="1" fill="#777"/><rect x="523.5" y="547.5" width="11" height="14" fill="#fff" stroke="#8c8c8c" stroke-width="1"/><rect x="523" y="561" width="12" height="1" fill="#777"/><rect x="523.5" y="568.5" width="11" height="14" fill="#fff" stroke="#8c8c8c" stroke-width="1"/><rect x="523" y="582" width="12" height="1" fill="#777"/><rect x="523.5" y="589.5" width="11" height="14" fill="#fff" stroke="#8c8c8c" stroke-width="1"/><rect x="523" y="603" width="12" height="1" fill="#777"/><rect x="523.5" y="610.5" width="11" height="14" fill="#fff" stroke="#8c8c8c" stroke-width="1"/><rect x="523" y="624" width="12" height="1" fill="#777"/><rect x="523.5" y="631.5" width="11" height="14" fill="#fff" stroke="#8c8c8c" stroke-width="1"/><rect x="523" y="645" width="12" height="1" fill="#777"/><rect x="523.5" y="652.5" width="11" height="14" fill="#fff" stroke="#8c8c8c" stroke-width="1"/><rect x="523" y="666" width="12" height="1" fill="#777"/><rect x="517.8" y="102" width="7.2000000000000455" height="2" fill="#03a9f4"/><rect x="531" y="102" width="6" height="2" fill="#03a9f4"/><rect x="545" y="102" width="2" height="2" fill="#10b4a0"/><rect x="561" y="102" width="2" height="2" fill="#03a9f4"/><rect x="569" y="102" width="2" height="2" fill="#10b4a0"/><rect x="578" y="102" width="2" height="2" fill="#03a9f4"/><rect x="519" y="105" width="5.600000000000023" height="2" fill="#03a9f4"/><rect x="531" y="105" width="5" height="2" fill="#03a9f4"/><rect x="545" y="105" width="4" height="2" fill="#10b4a0"/><rect x="561" y="105" width="2" height="2" fill="#03a9f4"/><rect x="569" y="105" width="4" height="2" fill="#03a9f4"/><rect x="578" y="105" width="2" height="2" fill="#10b4a0"/><rect x="519" y="108" width="7" height="2" fill="#03a9f4"/><rect x="529" y="108" width="8" height="2" fill="#03a9f4"/><rect x="545" y="108" width="2" height="2" fill="#10b4a0"/><rect x="561" y="108" width="3" height="2" fill="#03a9f4"/><rect x="569" y="108" width="1.5" height="2" fill="#03a9f4"/><rect x="578" y="108" width="6" height="2" fill="#03a9f4"/><rect x="519" y="111" width="7" height="2" fill="#03a9f4"/><rect x="531" y="111" width="5" height="2" fill="#03a9f4"/><rect x="561" y="111" width="1.5" height="2" fill="#03a9f4"/><rect x="569" y="111" width="1.5" height="2" fill="#10b4a0"/><rect x="578" y="111" width="3" height="2" fill="#03a9f4"/><rect x="589" y="111" width="3" height="2" fill="#10b4a0"/><rect x="519" y="114" width="7" height="2" fill="#03a9f4"/><rect x="529" y="114" width="7" height="2" fill="#03a9f4"/><rect x="561" y="114" width="1.5" height="2" fill="#03a9f4"/><rect x="569" y="114" width="4" height="2" fill="#10b4a0"/><rect x="576" y="114" width="4" height="2" fill="#03a9f4"/><rect x="519" y="117" width="7" height="2" fill="#03a9f4"/><rect x="531" y="117" width="6" height="2" fill="#03a9f4"/><rect x="545" y="117" width="6" height="2" fill="#0fbd5a"/><rect x="560" y="117" width="3" height="2" fill="#10b4a0"/><rect x="569" y="117" width="4" height="2" fill="#03a9f4"/><rect x="578" y="117" width="2" height="2" fill="#10b4a0"/><rect x="589" y="117" width="3" height="2" fill="#0fbd5a"/><rect x="569" y="120" width="2" height="2" fill="#2a6ab0"/><rect x="571" y="120" width="87" height="2" fill="#9c1fb0"/><rect x="658" y="120" width="3" height="2" fill="#03a9f4"/><rect x="591" y="123" width="2" height="2" fill="#10b4a0"/><rect x="593" y="123" width="65" height="2" fill="#9c1fb0"/><rect x="658" y="123" width="3" height="2" fill="#03a9f4"/><rect x="667" y="126" width="2" height="2" fill="#0fbd5a"/><rect x="669" y="126" width="2" height="2" fill="#f5a000"/><rect x="671" y="126" width="22" height="2" fill="#9c1fb0"/><rect x="693" y="126" width="4" height="2" fill="#0fbd5a"/><rect x="697" y="126" width="5" height="2" fill="#10b4a0"/><rect x="712" y="126" width="5" height="2" fill="#0fbd5a"/><rect x="737" y="126" width="4" height="2" fill="#0fbd5a"/><rect x="696" y="129" width="3" height="2" fill="#f5a000"/><rect x="699" y="129" width="10" height="2" fill="#9c1fb0"/><rect x="709" y="129" width="3" height="2" fill="#0fbd5a"/><rect x="712" y="129" width="17" height="2" fill="#0fbd5a"/><rect x="740" y="129" width="9" height="2" fill="#0fbd5a"/><rect x="749" y="129" width="4" height="2" fill="#0fbd5a"/><rect x="759" y="129" width="4" height="2" fill="#0fbd5a"/><rect x="765" y="129" width="4.5" height="2" fill="#0fbd5a"/><rect x="815" y="129" width="5" height="2" fill="#0fbd5a"/><rect x="945" y="129" width="5" height="2" fill="#0fbd5a"/><rect x="715.5" y="132" width="5.5" height="2" fill="#9c1fb0"/><rect x="721" y="132" width="3" height="2" fill="#0fbd5a"/><rect x="724" y="132" width="13" height="2" fill="#03a9f4"/><rect x="737" y="132" width="5" height="2" fill="#0fbd5a"/><rect x="945" y="132" width="5" height="2" fill="#03a9f4"/><rect x="737" y="135" width="13" height="2" fill="#0fbd5a"/><rect x="737" y="138" width="23" height="2" fill="#0fbd5a"/><rect x="764.5" y="138" width="4.5" height="2" fill="#10b4a0"/><rect x="805" y="141" width="8" height="2" fill="#0fbd5a"/><rect x="805" y="144" width="7" height="2" fill="#0fbd5a"/><rect x="812" y="144" width="5" height="2" fill="#03a9f4"/><rect x="806" y="147" width="6" height="2" fill="#0fbd5a"/><rect x="812" y="147" width="2" height="2" fill="#03a9f4"/><rect x="991.5" y="150" width="1.5" height="2" fill="#10b4a0"/><rect x="1074" y="150" width="1.5" height="2" fill="#10b4a0"/><rect x="1078.5" y="150" width="1.5" height="2" fill="#10b4a0"/><rect x="1194.5" y="150" width="1.5" height="2" fill="#10b4a0"/><rect x="1194.5" y="153" width="1.5" height="2" fill="#10b4a0"/><rect x="532" y="99.5" width="2" height="1" fill="#c8c8c8"/><rect x="536" y="99.5" width="2" height="1" fill="#c8c8c8"/><rect x="570" y="99.5" width="1" height="1" fill="#c8c8c8"/><rect x="591" y="99.5" width="2" height="1" fill="#c8c8c8"/><rect x="659" y="99.5" width="1" height="1" fill="#c8c8c8"/><rect x="662" y="99.5" width="2" height="1" fill="#c8c8c8"/><rect x="716" y="99.5" width="1" height="1" fill="#c8c8c8"/><rect x="737" y="99.5" width="1" height="1" fill="#c8c8c8"/><rect x="765" y="99.5" width="1" height="1" fill="#c8c8c8"/><rect x="775" y="99.5" width="12" height="1" fill="#c8c8c8"/><rect x="822" y="99.5" width="1" height="1" fill="#c8c8c8"/><rect x="946" y="99.5" width="1" height="1" fill="#c8c8c8"/><rect x="546" y="98" width="1" height="60" fill="#1565d8"/><rect x="547" y="98" width="1" height="60" fill="#cc1a1a"/><rect x="666" y="98" width="1" height="60" fill="#1565d8"/><rect x="670" y="98" width="1" height="60" fill="#cc1a1a"/><rect x="517" y="78" width="2.2" height="17" fill="#a8a8a8"/><rect x="517" y="95" width="1" height="63" fill="#c8c8c8"/></svg>
</body></html>
